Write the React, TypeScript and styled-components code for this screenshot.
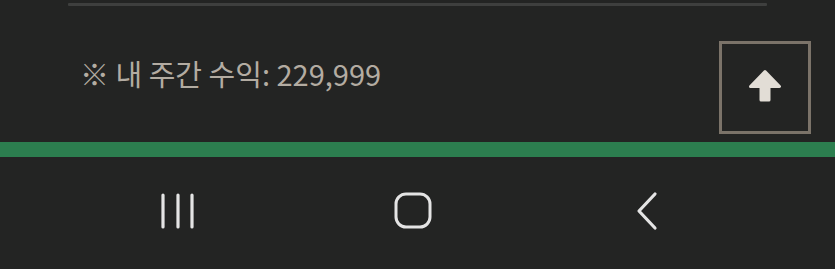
import React from "react";
import styled, { createGlobalStyle } from "styled-components";

const Global = createGlobalStyle`
  html, body { margin: 0; padding: 0; background: #232423; }
  body { width: 835px; height: 269px; overflow: hidden; }
`;

const Page = styled.div`
  width: 835px;
  height: 269px;
  display: flex;
  flex-direction: column;
  background: #232423;
`;

const Content = styled.section`
  display: flex;
  flex-direction: column;
  padding-top: 3px;
`;

const Divider = styled.div`
  height: 3px;
  margin: 0 68px 0 68px;
  background: #3e3f3e;
  border-radius: 1px;
`;

const Row = styled.div`
  display: flex;
  justify-content: space-between;
  align-items: flex-start;
  padding: 35px 24px 8px 80px;
`;

const Earnings = styled.p`
  margin: 13px 0 0 0;
  font-family: "Noto Sans CJK KR", "Noto Sans", sans-serif;
  font-size: 29px;
  line-height: 38px;
  color: #b3aca2;
  letter-spacing: 0;
`;

const TopButton = styled.button`
  box-sizing: border-box;
  width: 92px;
  height: 93px;
  border: 3px solid #7b7369;
  background: transparent;
  padding: 0 0 4px 0;
  display: flex;
  align-items: center;
  justify-content: center;
  cursor: pointer;
`;

const GreenBar = styled.div`
  height: 15px;
  background: #2c7e4f;
`;

const NavBar = styled.nav`
  flex: 1;
  display: flex;
  align-items: center;
  gap: 175px;
  padding-left: 148px;
  padding-bottom: 4px;
  background: #232423;
`;

const NavSlot = styled.div`
  width: 60px;
  height: 40px;
  display: flex;
  align-items: center;
  justify-content: center;
`;

const ArrowUp = () => (
  <svg width="36" height="34" viewBox="0 0 36 34">
    <path
      d="M18 2.5 L32.5 17.5 L22 17.5 L22 31 L14 31 L14 17.5 L3.5 17.5 Z"
      fill="#e2ddd6"
      stroke="#e2ddd6"
      strokeWidth="3"
      strokeLinejoin="round"
    />
  </svg>
);

const RecentIcon = () => (
  <svg width="36" height="38" viewBox="0 0 36 38">
    <g stroke="#e4e4e4" strokeWidth="3.2" strokeLinecap="round">
      <line x1="3" y1="3" x2="3" y2="35" />
      <line x1="18" y1="3" x2="18" y2="35" />
      <line x1="32" y1="3" x2="32" y2="35" />
    </g>
  </svg>
);

const HomeIcon = () => (
  <svg width="40" height="38" viewBox="0 0 40 38">
    <rect x="3" y="2" width="34" height="33" rx="10" fill="none" stroke="#e4e4e4" strokeWidth="3" />
  </svg>
);

const BackIcon = () => (
  <svg width="26" height="40" viewBox="0 0 26 40">
    <polyline
      points="20,3 4,20 20,37"
      fill="none"
      stroke="#e4e4e4"
      strokeWidth="3.2"
      strokeLinecap="round"
      strokeLinejoin="round"
    />
  </svg>
);

export default function App() {
  return (
    <Page>
      <Global />
      <Content>
        <Divider />
        <Row>
          <Earnings>※ 내 주간 수익: 229,999</Earnings>
          <TopButton aria-label="맨 위로">
            <ArrowUp />
          </TopButton>
        </Row>
      </Content>
      <GreenBar />
      <NavBar>
        <NavSlot><RecentIcon /></NavSlot>
        <NavSlot><HomeIcon /></NavSlot>
        <NavSlot><BackIcon /></NavSlot>
      </NavBar>
    </Page>
  );
}
